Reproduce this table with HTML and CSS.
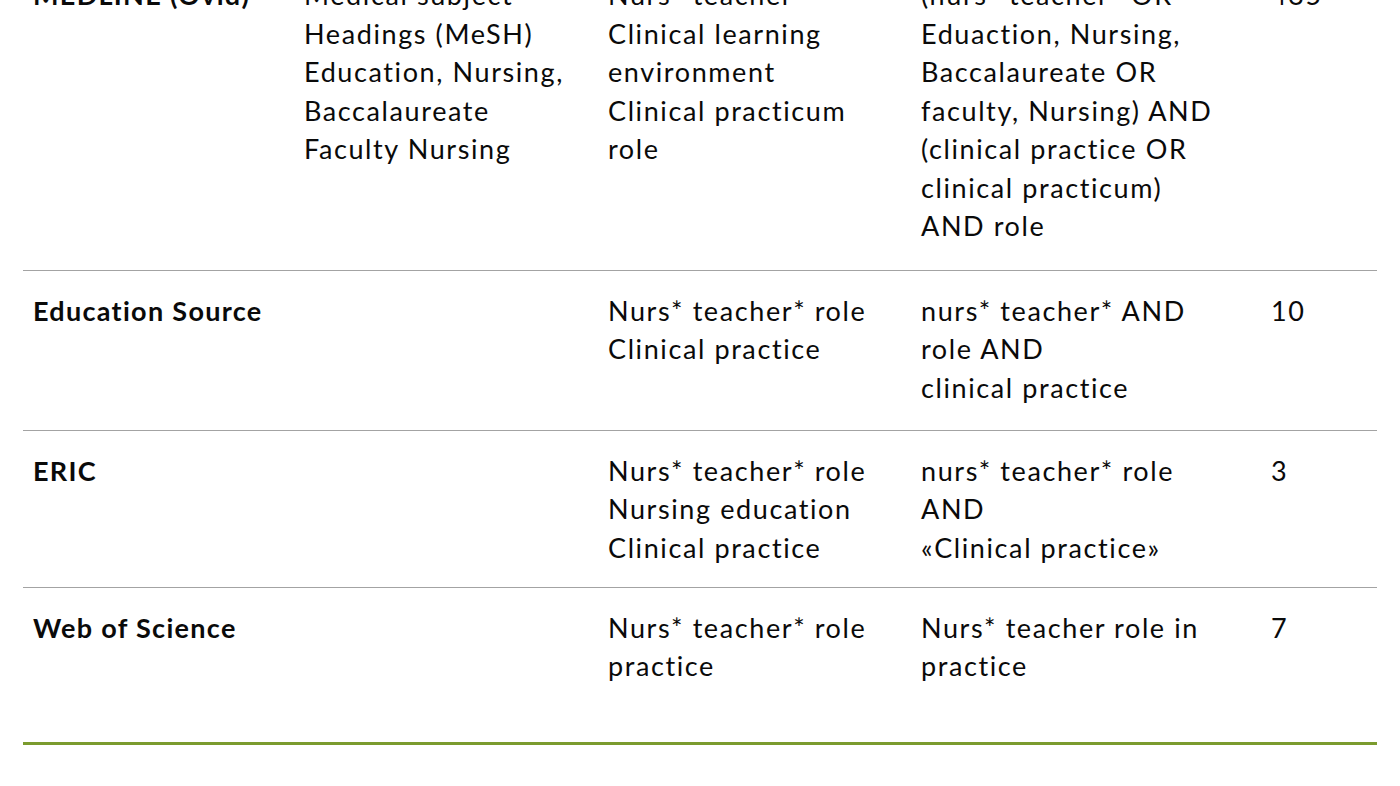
FILE: index.html
```html
<!DOCTYPE html>
<html lang="en">
<head>
<meta charset="utf-8">
<title>Search strategy</title>
<link rel="stylesheet" href="styles.css">
</head>
<body>
<table class="search-table">
  <colgroup>
    <col class="c-db">
    <col class="c-mesh">
    <col class="c-terms">
    <col class="c-query">
    <col class="c-hits">
  </colgroup>
  <tbody>
    <tr class="row row-medline">
      <td class="db">MEDLINE (Ovid)</td>
      <td>Medical subject<br>Headings (MeSH)<br>Education, Nursing,<br>Baccalaureate<br>Faculty Nursing</td>
      <td>Nurs* teacher<br>Clinical learning<br>environment<br>Clinical practicum<br>role</td>
      <td>(nurs* teacher* OR<br>Eduaction, Nursing,<br>Baccalaureate OR<br>faculty, Nursing) AND<br>(clinical practice OR<br>clinical practicum)<br>AND role</td>
      <td>435</td>
    </tr>
    <tr class="row row-std">
      <td class="db">Education Source</td>
      <td></td>
      <td>Nurs* teacher* role<br>Clinical practice</td>
      <td>nurs* teacher* AND<br>role AND<br>clinical practice</td>
      <td>10</td>
    </tr>
    <tr class="row row-std2">
      <td class="db">ERIC</td>
      <td></td>
      <td>Nurs* teacher* role<br>Nursing education<br>Clinical practice</td>
      <td>nurs* teacher* role<br>AND<br>«Clinical practice»</td>
      <td>3</td>
    </tr>
    <tr class="row row-last">
      <td class="db">Web of Science</td>
      <td></td>
      <td>Nurs* teacher* role<br>practice</td>
      <td>Nurs* teacher role in<br>practice</td>
      <td>7</td>
    </tr>
  </tbody>
</table>
</body>
</html>
```

FILE: styles.css
```css
html, body {
  margin: 0;
  padding: 0;
  background: #ffffff;
}

body {
  font-family: "Lato", "Liberation Sans", sans-serif;
  font-size: 27px;
  line-height: 38.5px;
  letter-spacing: 1.6px;
  color: #0a0a0a;
  overflow: hidden;
}

.search-table {
  width: 1354px;
  margin: -45px 0 0 23px;
  border-collapse: collapse;
  table-layout: fixed;
}

.c-db { width: 271px; }
.c-mesh { width: 304px; }
.c-terms { width: 313px; }
.c-query { width: 350px; }
.c-hits { width: 116px; }

.search-table td {
  vertical-align: top;
  padding: 21px 10px 0 10px;
  white-space: nowrap;
}

.search-table .db {
  font-weight: 700;
  letter-spacing: 1.3px;
}

.row {
  border-bottom: 1.5px solid #a3a3a3;
}

.row-medline { height: 315px; }
.row-std { height: 160px; }
.row-std2 { height: 157px; }
.row-last {
  height: 156px;
  border-bottom: 3px solid #7b9b2e;
}
```
